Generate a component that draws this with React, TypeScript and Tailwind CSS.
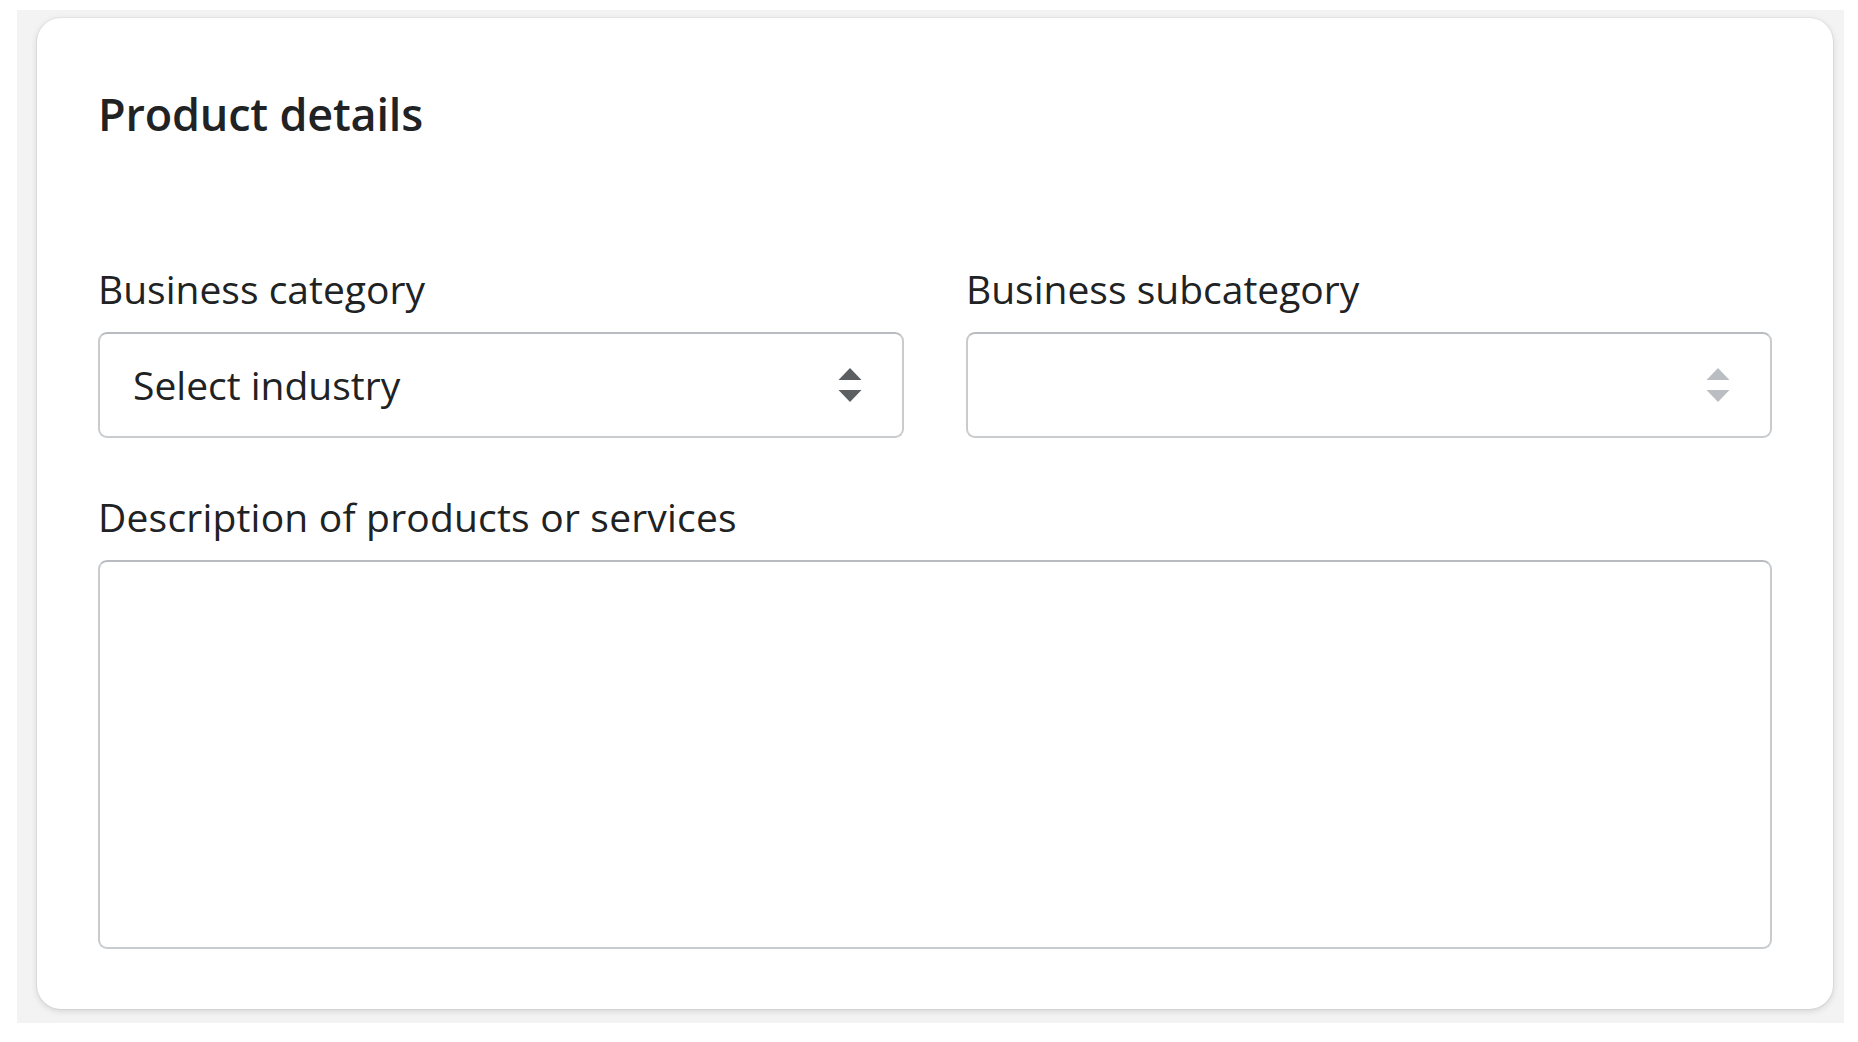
import React from "react";

function Arrows({ color }: { color: string }) {
  return (
    <svg width="24" height="36" viewBox="0 0 24 36" aria-hidden="true">
      <path d="M12 1 L23.5 13 L0.5 13 Z" fill={color} />
      <path d="M0.5 23 L23.5 23 L12 35 Z" fill={color} />
    </svg>
  );
}

export default function App() {
  const font = { fontFamily: '"Open Sans", "Noto Sans", sans-serif' };
  return (
    <div className="min-h-screen w-full bg-white pl-[17px] pt-[10px]" style={font}>
      <div className="w-[1827px] h-[1013px] bg-[#f3f3f3] pl-[20px] pt-[8px]">
        <div className="w-[1796px] h-[991px] bg-white rounded-[24px] px-[61px] pt-[68px] shadow-[0_0_0_1px_rgba(63,63,68,0.05),0_2px_6px_rgba(63,63,68,0.18)]">
          <h2 className="text-[45px] leading-[56px] font-semibold text-[#202223] tracking-[-0.2px]">
            Product details
          </h2>
          <div className="mt-[123px] grid grid-cols-2 gap-x-[62px]">
            <div>
              <div className="text-[39px] leading-[48px] text-[#202223]">Business category</div>
              <div className="mt-[19px] h-[106px] rounded-[9px] border-2 border-[#c9cccf] border-t-[#b8bcc0] bg-white flex items-center justify-between pl-[33px] pr-[40px]">
                <span className="text-[39px] text-[#202223]">Select industry</span>
                <Arrows color="#5c5f62" />
              </div>
            </div>
            <div>
              <div className="text-[39px] leading-[48px] text-[#202223]">Business subcategory</div>
              <div className="mt-[19px] h-[106px] rounded-[9px] border-2 border-[#c9cccf] border-t-[#b8bcc0] bg-white flex items-center justify-end pl-[33px] pr-[40px]">
                <Arrows color="#babec3" />
              </div>
            </div>
          </div>
          <div className="mt-[55px] text-[39px] leading-[48px] text-[#202223] tracking-[0.2px]">
            Description of products or services
          </div>
          <div className="mt-[19px] h-[389px] rounded-[9px] border-2 border-[#c9cccf] border-t-[#b8bcc0] bg-white" />
        </div>
      </div>
    </div>
  );
}
